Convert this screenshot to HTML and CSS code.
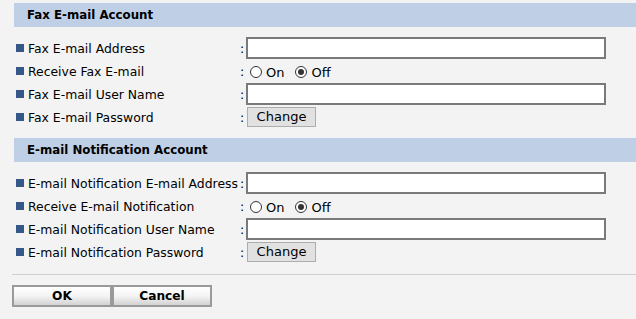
FILE: index.html
```html
<!DOCTYPE html>
<html>
<head>
<meta charset="utf-8">
<link rel="stylesheet" href="styles.css">
</head>
<body>
<div class="page">
  <section class="sec">
    <h2 class="sec-title">Fax E-mail Account</h2>
    <div class="rows">
      <div class="row"><span class="label">Fax E-mail Address</span><span class="colon">:</span><input class="text" type="text"></div>
      <div class="row"><span class="label">Receive Fax E-mail</span><span class="colon">:</span>
        <label class="radio"><span class="dot"></span>On</label>
        <label class="radio"><span class="dot on"></span>Off</label></div>
      <div class="row"><span class="label">Fax E-mail User Name</span><span class="colon">:</span><input class="text" type="text"></div>
      <div class="row"><span class="label">Fax E-mail Password</span><span class="colon">:</span><button class="change">Change</button></div>
    </div>
  </section>
  <section class="sec">
    <h2 class="sec-title">E-mail Notification Account</h2>
    <div class="rows">
      <div class="row"><span class="label">E-mail Notification E-mail Address</span><span class="colon">:</span><input class="text" type="text"></div>
      <div class="row"><span class="label">Receive E-mail Notification</span><span class="colon">:</span>
        <label class="radio"><span class="dot"></span>On</label>
        <label class="radio"><span class="dot on"></span>Off</label></div>
      <div class="row"><span class="label">E-mail Notification User Name</span><span class="colon">:</span><input class="text" type="text"></div>
      <div class="row"><span class="label">E-mail Notification Password</span><span class="colon">:</span><button class="change">Change</button></div>
    </div>
  </section>
  <div class="footer">
    <button class="act">OK</button><button class="act">Cancel</button>
  </div>
</div>
</body>
</html>
```
FILE: styles.css
```css
html, body { margin: 0; padding: 0; }
body {
  background: #f3f3f3;
  font-family: "DejaVu Sans", Verdana, sans-serif;
  font-size: 12.4px;
  color: #000;
  width: 636px;
  height: 319px;
  overflow: hidden;
}
.page { padding-top: 3px; }
.sec { margin-bottom: 10px; }
.sec-title {
  margin: 0 0 0 14px;
  height: 24px;
  line-height: 25px;
  background: #bfd0e6;
  font-size: 11.8px;
  font-weight: bold;
  padding-left: 13px;
}
.rows { padding: 9px 0 0 16px; }
.row {
  display: flex;
  align-items: center;
  height: 23px;
}
.label {
  display: flex;
  align-items: center;
  width: 224px;
  white-space: nowrap;
  padding-top: 1px;
}
.label::before {
  content: "";
  width: 8px;
  height: 8px;
  background: #355888;
  margin-right: 4px;
  flex: none;
}
.colon { width: 6px; padding-top: 2px; }
.text {
  box-sizing: border-box;
  width: 360px;
  height: 22px;
  border: 2px solid #7a7a7a;
  background: #fff;
  margin: 1px 0 0 0;
  padding: 0;
  outline: none;
}
.radio {
  display: flex;
  align-items: center;
  margin-left: 4px;
  margin-right: 7px;
  padding-top: 3px;
  font-size: 13px;
}
.dot {
  box-sizing: border-box;
  width: 12px;
  height: 12px;
  border: 1px solid #333;
  border-radius: 50%;
  background: #fff;
  margin-right: 4px;
  position: relative;
}
.dot.on::after {
  content: "";
  position: absolute;
  left: 2px; top: 2px;
  width: 6px; height: 6px;
  border-radius: 50%;
  background: #333;
}
.change {
  box-sizing: border-box;
  margin-left: 1px;
  width: 69px;
  height: 20px;
  background: #e1e1e1;
  border: 1px solid #adadad;
  font-family: inherit;
  font-size: 13px;
  padding: 0;
  color: #000;
}
.footer {
  margin: 11px 0 0 12px;
  border-top: 1px solid #cfcfcf;
  padding-top: 10px;
  display: flex;
}
.act {
  box-sizing: border-box;
  width: 100px;
  height: 22px;
  border: 2px solid #9a9a9a;
  background: linear-gradient(#ffffff 0%, #f4f4f4 50%, #d2d2d2 100%);
  font-family: inherit;
  font-size: 12.2px;
  font-weight: bold;
  padding: 0;
  color: #000;
}
```
